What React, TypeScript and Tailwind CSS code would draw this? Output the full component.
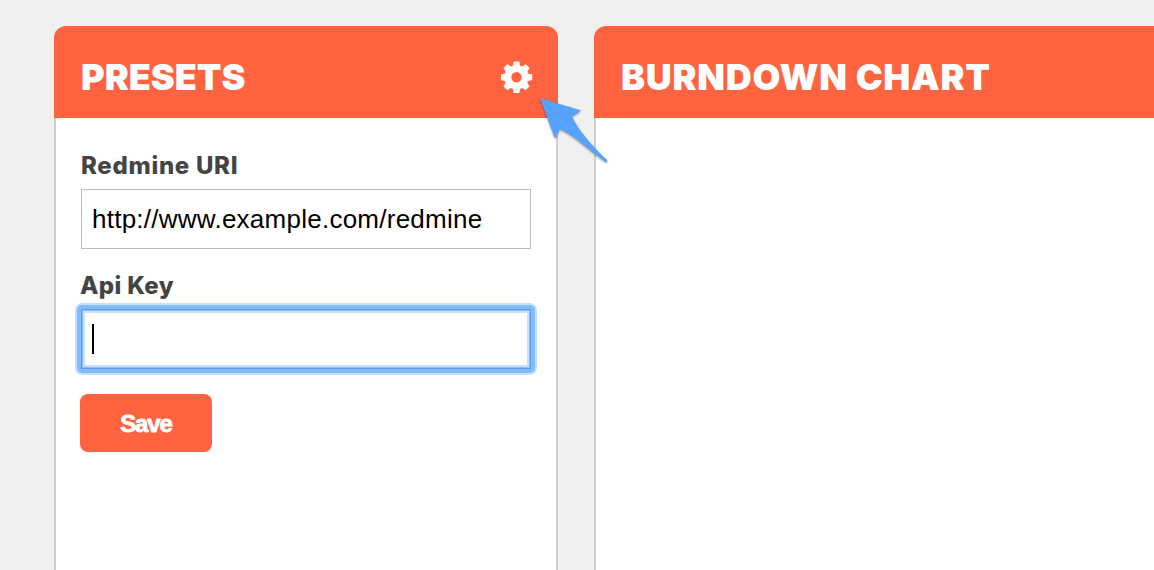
import { useState } from "react";

const TEETH = [0, 45, 90, 135, 180, 225, 270, 315];

function Gear() {
  return (
    <svg viewBox="-15.5 -16.3 32 32" className="h-8 w-8 fill-white">
      <circle r="8.6" fill="none" className="stroke-white" strokeWidth="6.8" />
      {TEETH.map((angle) => (
        <path
          key={angle}
          transform={`rotate(${angle})`}
          d="M-4.2-11Q-3.4-12-3.2-13.4L-3-15.2Q-2.9-15.7-2.3-15.7H2.3Q2.9-15.7 3-15.2L3.2-13.4Q3.4-12 4.2-11Z"
        />
      ))}
    </svg>
  );
}

export default function App() {
  const [uri, setUri] = useState("http://www.example.com/redmine");
  return (
    <div className="relative flex h-[570px] w-full gap-9 overflow-hidden bg-[#f0f0f0] pt-[26px] pl-[54px] font-['Inter',sans-serif]">
      <section className="flex w-[504px] shrink-0 flex-col">
        <header className="flex h-[92px] shrink-0 items-center justify-between rounded-t-xl bg-[#ff6340] pt-[10px] pr-[25px] pl-[27px]">
          <h2 className="text-[36px] leading-none font-black tracking-[0px] text-white">PRESETS</h2>
          <button aria-label="Settings"><Gear /></button>
        </header>
        <form className="grow border-x-2 border-[#cfcfcf] bg-white pt-[33px] pl-6" onSubmit={(e) => e.preventDefault()}>
          <label className="flex flex-col">
            <span className="h-[38px] pl-[1px] text-[24px] leading-[30px] font-extrabold tracking-[0.7px] text-[#444]">Redmine URI</span>
            <input
              value={uri}
              onChange={(e) => setUri(e.target.value)}
              className="ml-[1px] h-[60px] w-[450px] border border-[#bdbdbd] px-[10px] font-['Liberation_Sans',sans-serif] text-[26px] tracking-[0.25px] text-black outline-none"
            />
          </label>
          <div className="mt-[22px] flex flex-col">
            <span className="h-[32px] text-[24px] leading-[30px] font-extrabold tracking-[0.35px] text-[#444]">Api Key</span>
            <div className="-ml-[5px] h-[72px] w-[462px] rounded-[7px] bg-[#c5e0ff] p-[2px]">
              <div className="h-full rounded-[5px] bg-[#80bcff] p-1">
                <div className="flex h-full items-center border border-[#609fe6] bg-white pl-[10px] shadow-[inset_0_0_0_1px_#8cbcf2,inset_0_0_0_3px_#c8e1ff]">
                  <span className="h-[30px] w-[2px] bg-black" />
                </div>
              </div>
            </div>
          </div>
          <button className="mt-[19px] h-[58px] w-[132px] rounded-lg bg-[#ff6340] pt-[2px] font-['Liberation_Sans',sans-serif] text-[24px] font-bold tracking-[-1.1px] text-white [-webkit-text-stroke:0.8px_white]">
            Save
          </button>
        </form>
      </section>
      <section className="flex grow flex-col">
        <header className="flex h-[92px] shrink-0 items-center rounded-tl-xl bg-[#ff6340] pt-[10px] pl-[27px]">
          <h2 className="text-[36px] leading-none font-black tracking-[0.75px] whitespace-nowrap text-white">BURNDOWN CHART</h2>
        </header>
        <div className="grow border-l-2 border-[#cfcfcf] bg-white" />
      </section>
      <svg viewBox="0 0 80 76" className="absolute top-[92px] left-[535px] h-[76px] w-[80px] drop-shadow-[0_1px_1px_rgba(0,0,0,0.4)]">
        <path fill="#57a1ff" d="M5 6 46 18.5 37 24.5C43 38 58 55 72 68Q73 70.5 70.5 70C56 60 43 46 25 37L20 46.5Z" />
      </svg>
    </div>
  );
}
